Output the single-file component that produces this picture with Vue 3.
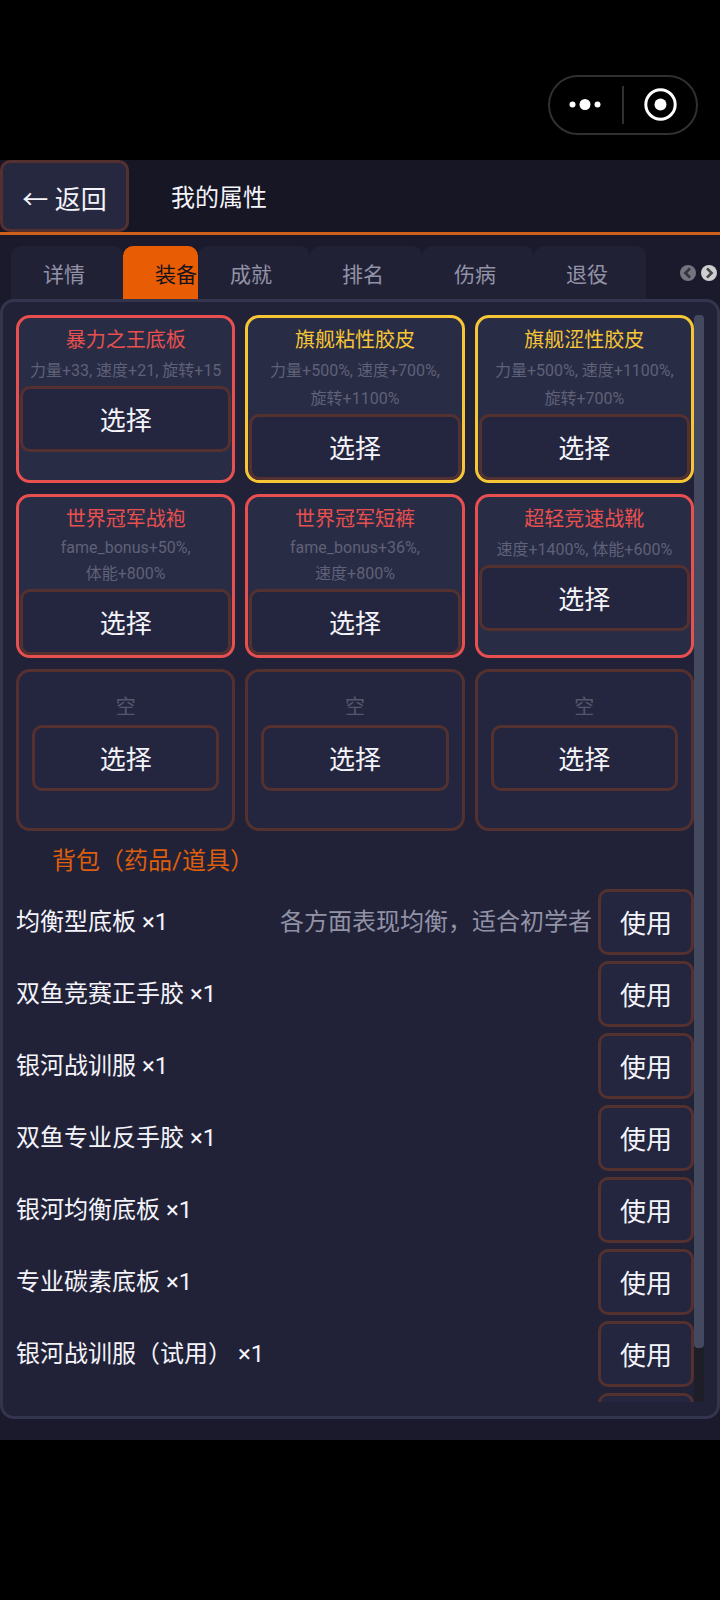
<template>
  <div class="screen">
    <div class="status-area">
      <div class="capsule">
        <button class="capsule-btn" aria-label="更多">
          <svg width="34" height="34" viewBox="0 0 34 34" fill="#fff">
            <circle cx="3.5" cy="16.5" r="3" />
            <circle cx="16" cy="16.5" r="5.5" />
            <circle cx="28.5" cy="16.5" r="3" />
          </svg>
        </button>
        <span class="capsule-line"></span>
        <button class="capsule-btn" aria-label="关闭">
          <svg width="34" height="34" viewBox="0 0 34 34">
            <circle cx="17.5" cy="16.5" r="14.7" fill="none" stroke="#fff" stroke-width="3" />
            <circle cx="17.5" cy="16.5" r="6" fill="#fff" />
          </svg>
        </button>
      </div>
    </div>

    <main class="game">
      <header class="header">
        <button class="btn back-btn">← 返回</button>
        <h1>我的属性</h1>
      </header>

      <nav class="tabs">
        <button
          v-for="tab in tabs"
          :key="tab"
          :class="['tab', { active: tab === activeTab }]"
          @click="activeTab = tab"
        >
          {{ tab }}
        </button>
        <div class="tab-arrows">
          <button class="arrow dim" aria-label="上一页">
            <svg width="16" height="16" viewBox="0 0 16 16">
              <path d="M10 3.4 L5.4 8 L10 12.6" />
            </svg>
          </button>
          <button class="arrow" aria-label="下一页">
            <svg width="16" height="16" viewBox="0 0 16 16">
              <path d="M6 3.4 L10.6 8 L6 12.6" />
            </svg>
          </button>
        </div>
      </nav>

      <section class="panel">
        <div ref="scroller" class="scroller" @scroll="updateThumb">
          <div class="slots">
            <div v-for="(slot, i) in slots" :key="i" :class="['slot', slot.rarity]">
              <template v-if="slot.name">
                <h3>{{ slot.name }}</h3>
                <p :class="{ latin: slot.latin }">
                  <span v-for="line in slot.lines" :key="line">{{ line }}</span>
                </p>
              </template>
              <div v-else class="empty-label">空</div>
              <button class="btn select-btn">选择</button>
            </div>
          </div>

          <h2>背包（药品/道具）</h2>

          <ul class="bag">
            <li v-for="(item, i) in items" :key="i">
              <span class="item-name">{{ item.name }}</span>
              <span class="item-desc">{{ item.desc }}</span>
              <button class="btn use-btn">使用</button>
            </li>
          </ul>
        </div>
        <div class="rail">
          <div class="thumb" :style="{ height: thumb.size + '%', marginTop: thumb.offset + 'px' }"></div>
        </div>
      </section>
    </main>
  </div>
</template>

<script setup>
import { onMounted, reactive, ref } from 'vue';

const tabs = ['详情', '装备', '成就', '排名', '伤病', '退役'];
const activeTab = ref('装备');

const slots = [
  { name: '暴力之王底板', rarity: 'red', lines: ['力量+33, 速度+21, 旋转+15'] },
  { name: '旗舰粘性胶皮', rarity: 'gold', lines: ['力量+500%, 速度+700%,', '旋转+1100%'] },
  { name: '旗舰涩性胶皮', rarity: 'gold', lines: ['力量+500%, 速度+1100%,', '旋转+700%'] },
  { name: '世界冠军战袍', rarity: 'red', latin: true, lines: ['fame_bonus+50%,', '体能+800%'] },
  { name: '世界冠军短裤', rarity: 'red', latin: true, lines: ['fame_bonus+36%,', '速度+800%'] },
  { name: '超轻竞速战靴', rarity: 'red', lines: ['速度+1400%, 体能+600%'] },
  { rarity: 'empty' },
  { rarity: 'empty' },
  { rarity: 'empty' }
];

const items = [
  { name: '均衡型底板 ×1', desc: '各方面表现均衡，适合初学者' },
  { name: '双鱼竞赛正手胶 ×1' },
  { name: '银河战训服 ×1' },
  { name: '双鱼专业反手胶 ×1' },
  { name: '银河均衡底板 ×1' },
  { name: '专业碳素底板 ×1' },
  { name: '银河战训服（试用） ×1' },
  { name: '' }
];

const scroller = ref(null);
const thumb = reactive({ size: 95, offset: 0 });

// thumb follows the scroll position of the list
const updateThumb = () => {
  const el = scroller.value;
  const ratio = el.clientHeight / el.scrollHeight;
  thumb.size = ratio * 100;
  thumb.offset = el.scrollTop * ratio;
};

onMounted(updateThumb);
</script>

<style>
body {
  margin: 0;
  background: #000;
}
</style>

<style scoped>
.screen {
  display: flex;
  flex-direction: column;
  height: 100vh;
  padding-bottom: 160px;
  box-sizing: border-box;
  background: #000;
  color: #f4f4fa;
  font-family: Roboto, "Noto Sans CJK SC", sans-serif;
}

.screen * {
  box-sizing: border-box;
}

h1,
h2,
h3,
p,
ul {
  margin: 0;
  padding: 0;
  font-weight: 400;
}

button {
  margin: 0;
  padding: 0;
  border: none;
  background: none;
  color: inherit;
  font-family: inherit;
  cursor: pointer;
}

svg {
  display: block;
}

.status-area {
  flex: none;
  display: flex;
  justify-content: flex-end;
  height: 160px;
  padding: 75px 22px 0 0;
}

.capsule {
  display: flex;
  align-items: center;
  width: 150px;
  height: 60px;
  border: 2px solid #303030;
  border-radius: 30px;
}

.capsule-btn {
  flex: 1;
  display: flex;
  justify-content: center;
}

.capsule-line {
  width: 2px;
  height: 38px;
  background: #303030;
}

.game {
  flex: 1;
  min-height: 0;
  display: flex;
  flex-direction: column;
  padding-bottom: 21px;
  background: #1a1a2c;
}

.header {
  display: flex;
  align-items: center;
  gap: 42px;
  height: 75px;
  border-bottom: 3px solid #d0601a;
  background: #171624;
}

.header h1 {
  padding-top: 4px;
  font-size: 24px;
  line-height: 36px;
}

.btn {
  padding-top: 4px;
  border: 3px solid #54302f;
  border-radius: 10px;
  background: #24263f;
  font-size: 26px;
  line-height: 38px;
}

.back-btn {
  width: 129px;
  height: 72px;
  padding-top: 8px;
  background: #262840;
}

.tabs {
  display: flex;
  height: 64px;
  padding: 11px 3px 0 11px;
}

.tab {
  width: 112px;
  padding: 4px 0 0 32px;
  overflow: hidden;
  border-radius: 10px 10px 0 0;
  background: #212136;
  color: #9292a6;
  font-size: 21px;
  line-height: 32px;
  text-align: left;
  white-space: nowrap;
}

.tab.active {
  width: 75px;
  background: #e85d04;
  color: #16131c;
}

.tab-arrows {
  display: flex;
  align-items: center;
  gap: 5px;
  margin-left: auto;
}

.arrow {
  border-radius: 50%;
  background: #cfcfd1;
}

.arrow path {
  fill: none;
  stroke: #45464a;
  stroke-width: 2.6;
}

.arrow.dim {
  background: #74747e;
}

.arrow.dim path {
  stroke: #33333f;
}

.panel {
  flex: 1;
  min-height: 0;
  display: flex;
  padding: 13px 13px 14px;
  border: 3px solid #33354f;
  border-radius: 14px;
  background: #212238;
}

.scroller {
  flex: 1;
  overflow-y: auto;
  scrollbar-width: none;
}

.rail {
  width: 10px;
  border-radius: 4px;
  background: #1d1e28;
}

.thumb {
  border-radius: 4px;
  background: #444960;
}

.slots {
  display: grid;
  grid-template-columns: repeat(3, 1fr);
  gap: 11px 10px;
}

.slot {
  display: flex;
  flex-direction: column;
  border: 3px solid #54302f;
  border-radius: 14px;
  background: #292c45;
  text-align: center;
}

.slot.red {
  border-color: #e8504f;
}

.slot.gold {
  border-color: #f6c636;
}

.slot h3 {
  padding: 6px 0 1px;
  font-size: 20px;
  line-height: 32px;
}

.slot.red h3 {
  color: #e8504f;
}

.slot.gold h3 {
  color: #f6c636;
}

.slot p {
  padding-bottom: 1px;
  color: #5f6178;
  font-size: 16px;
  line-height: 28px;
  white-space: nowrap;
}

.slot p.latin {
  margin-top: -1px;
  padding-bottom: 2px;
  line-height: 26px;
}

.slot p span {
  display: block;
}

.select-btn {
  height: 66px;
  margin: 0 1px;
}

.slot.empty {
  min-height: 162px;
  padding: 13px;
  background: #24263f;
}

.slot.empty .select-btn {
  margin: 0;
}

.empty-label {
  padding-top: 4px;
  color: #55566c;
  font-size: 20px;
  line-height: 36px;
}

h2 {
  padding: 12px 36px 10px;
  color: #dd5e0c;
  font-size: 24px;
  line-height: 36px;
}

.bag {
  display: flex;
  flex-direction: column;
  gap: 6px;
  list-style: none;
}

.bag li {
  display: flex;
  align-items: center;
  gap: 6px;
  font-size: 24px;
  line-height: 36px;
}

.item-name {
  flex: 1;
}

.item-desc {
  color: #9292a6;
}

.use-btn {
  width: 96px;
  height: 66px;
}
</style>
